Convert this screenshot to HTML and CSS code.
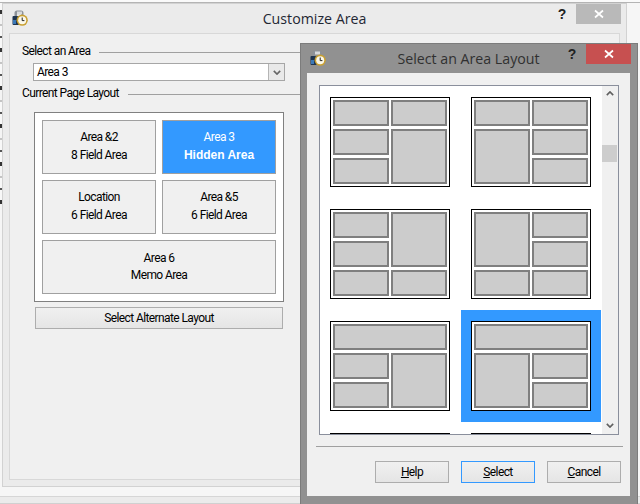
FILE: index.html
```html
<!DOCTYPE html>
<html lang="en">
<head>
<meta charset="utf-8">
<title>Customize Area</title>
<link rel="stylesheet" href="styles.css">
</head>
<body>
<svg class="defs" width="0" height="0" aria-hidden="true">
  <defs>
    <symbol id="app-icon" viewBox="0 0 16 16">
      <rect x="0.5" y="6" width="8" height="9" rx="1" fill="#1f3550"/>
      <rect x="1" y="10" width="3" height="4" fill="#3a78b8"/>
      <path d="M2.5 6 V3 Q2.5 0.5 5 0.5 H9 Q11.5 0.5 11.5 3 V6 H9 V3.2 H5 V6 Z" fill="#8d9298"/>
      <rect x="5" y="1.5" width="5" height="3" fill="#d8dadc"/>
      <circle cx="10.2" cy="10.2" r="5.6" fill="#c9a032"/>
      <circle cx="10.2" cy="10.2" r="4" fill="#fbf8ea"/>
      <path d="M10.2 7.5 V10.6 H12.4" fill="none" stroke="#222" stroke-width="1"/>
    </symbol>
    <symbol id="close-x" viewBox="0 0 10 10">
      <path d="M1 1.5 L9 8.5 M9 1.5 L1 8.5" fill="none" stroke="#fff" stroke-width="1.7"/>
    </symbol>
  </defs>
</svg>

<main class="desktop">
  <section class="window window-back">
    <header class="titlebar">
      <svg class="app-icon"><use href="#app-icon"/></svg>
      <h1 class="title">Customize Area</h1>
      <div class="controls">
        <span class="help-mark">?</span>
        <span class="close close-idle"><svg class="close-icon"><use href="#close-x"/></svg></span>
      </div>
    </header>
    <div class="client form">
      <div class="group-label"><span>Select an Area</span></div>
      <div class="combo">
        <span class="combo-value">Area 3</span>
        <span class="combo-drop">
          <svg class="chev-small" viewBox="0 0 10 6"><path d="M1 1 L5 5 L9 1" fill="none" stroke="#666" stroke-width="2"/></svg>
        </span>
      </div>
      <div class="group-label"><span>Current Page Layout</span></div>
      <div class="areas">
        <button class="area"><span>Area &amp;2</span><span>8 Field Area</span></button>
        <button class="area area-on"><span>Area 3</span><strong>Hidden Area</strong></button>
        <button class="area"><span>Location</span><span>6 Field Area</span></button>
        <button class="area"><span>Area &amp;5</span><span>6 Field Area</span></button>
        <button class="area area-wide"><span>Area 6</span><span>Memo Area</span></button>
      </div>
      <button class="btn btn-alt">Select Alternate Layout</button>
    </div>
  </section>

  <section class="window window-front">
    <header class="titlebar">
      <svg class="app-icon"><use href="#app-icon"/></svg>
      <h2 class="title">Select an Area Layout</h2>
      <div class="controls">
        <span class="help-mark">?</span>
        <span class="close close-red"><svg class="close-icon"><use href="#close-x"/></svg></span>
      </div>
    </header>
    <div class="client picker">
      <div class="listbox">
        <div class="tiles">
          <div class="tile"><div class="thumb"><i></i><i></i><i></i><i class="r2"></i><i></i></div></div>
          <div class="tile"><div class="thumb"><i></i><i></i><i class="r2"></i><i></i><i></i></div></div>
          <div class="tile"><div class="thumb"><i></i><i class="r2"></i><i></i><i></i><i></i></div></div>
          <div class="tile"><div class="thumb"><i class="r2"></i><i></i><i></i><i></i><i></i></div></div>
          <div class="tile"><div class="thumb"><i class="c2"></i><i></i><i class="r2"></i><i></i></div></div>
          <div class="tile tile-on"><div class="thumb"><i class="c2"></i><i class="r2"></i><i></i><i></i></div></div>
          <div class="tile"><div class="thumb"></div></div>
          <div class="tile"><div class="thumb"></div></div>
        </div>
        <div class="scrollbar">
          <svg class="chev" viewBox="0 0 10 6"><path d="M1 5 L5 1 L9 5" fill="none" stroke="#606060" stroke-width="2"/></svg>
          <div class="thumb-bar"></div>
          <svg class="chev chev-down" viewBox="0 0 10 6"><path d="M1 1 L5 5 L9 1" fill="none" stroke="#606060" stroke-width="2"/></svg>
        </div>
      </div>
      <hr class="rule">
      <div class="actions">
        <button class="btn btn-act"><u>H</u>elp</button>
        <button class="btn btn-act btn-default"><u>S</u>elect</button>
        <button class="btn btn-act"><u>C</u>ancel</button>
      </div>
    </div>
  </section>
</main>
</body>
</html>
```
FILE: styles.css
```css
* { box-sizing: border-box; }
html, body { margin: 0; padding: 0; }
body {
  width: 640px;
  height: 504px;
  overflow: hidden;
  font-family: Roboto, "Liberation Sans", Arial, sans-serif;
  font-size: 12px;
  letter-spacing: -0.6px;
  color: #000;
}
.defs { position: absolute; }

.desktop {
  position: relative;
  width: 640px;
  height: 504px;
  overflow: hidden;
  background:
    linear-gradient(#f6f6f6 0 496px, #d6d6d6 496px 497px, #ebebeb 497px 503px, #d0d0d0 503px),
    #f6f6f6;
}
.desktop::before {
  content: "";
  position: absolute;
  left: 0;
  top: 0;
  width: 2px;
  height: 210px;
  background: repeating-linear-gradient(#f8f8f8 0 10px, #333 10px 14px, #f4f4f4 14px 24px, #c4c4c4 24px 26px, #f8f8f8 26px 36px, #555 36px 38px);
}
.desktop::after {
  content: "";
  position: absolute;
  left: 0;
  top: 0;
  width: 640px;
  height: 3px;
  background: linear-gradient(#fafafa 0 2px, #b4b4b4 2px);
}

.window { position: absolute; display: flex; flex-direction: column; z-index: 1; }
.window-back {
  left: 2px;
  top: 3px;
  width: 625px;
  height: 484px;
  background: #ebebeb;
  border: 1px solid #d2d2d2;
  padding: 0 6px 6px;
}
.window-front {
  left: 300px;
  top: 43px;
  width: 338px;
  height: 470px;
  background: #919191;
  border: 1px solid #7c7c7c;
  padding: 0 7px 16px 6px;
  z-index: 2;
}

.titlebar {
  position: relative;
  flex: none;
  height: 29px;
  display: grid;
  grid-template-columns: 1fr auto 1fr;
  align-items: center;
}
.app-icon { width: 16px; height: 16px; margin: 0 0 2px 3px; }
.title {
  margin: 0;
  font-family: "Open Sans", "Noto Sans", sans-serif;
  font-weight: 400;
  font-size: 14.2px;
  letter-spacing: 0;
  color: #1f2733;
}
.window-front .title { color: #303030; }
.controls {
  justify-self: end;
  align-self: start;
  display: flex;
  align-items: flex-start;
  gap: 8px;
  letter-spacing: 0;
}
.help-mark {
  width: 12px;
  font-family: "Liberation Sans", sans-serif;
  font-weight: 700;
  font-size: 14px;
  line-height: 20px;
  text-align: center;
  color: #222;
}
.close {
  width: 45px;
  height: 20px;
  display: flex;
  align-items: center;
  justify-content: center;
}
.close-idle { background: #b9b9b9; }
.close-red { background: #c75050; }
.close-icon { width: 10px; height: 10px; }
.window-back .controls { margin-right: -1px; }
.window-front .controls { margin-right: -1px; }

.client {
  flex: 1;
  background: #f0f0f0;
  min-height: 0;
}
.form {
  border: 1px solid #d8d8d8;
  padding: 10px 8px 0 12px;
}
.group-label {
  display: flex;
  align-items: center;
  height: 14px;
  gap: 9px;
  white-space: nowrap;
}
.group-label::after {
  content: "";
  flex: 1;
  height: 1px;
  margin-top: 2px;
  background: #a0a0a0;
}
.combo {
  margin: 5px 0 5px 11px;
  width: 252px;
  height: 18px;
  display: flex;
  background: #fff;
  border: 1px solid #a6a6a6;
}
.combo-value { flex: 1; padding-left: 3px; line-height: 16px; }
.combo-drop {
  width: 16px;
  display: flex;
  align-items: center;
  justify-content: center;
  background: #e9e9e9;
  border-left: 1px solid #b5b5b5;
}
.chev-small { width: 8px; height: 5px; }

.areas {
  margin: 12px 0 0 12px;
  width: 250px;
  height: 190px;
  padding: 7px;
  background: #fff;
  border: 1px solid #808080;
  display: grid;
  grid-template-columns: 114px 114px;
  grid-auto-rows: 54px;
  gap: 6px;
}
.area {
  font: inherit;
  letter-spacing: inherit;
  padding: 0 0 2px;
  background: #f0f0f0;
  border: 1px solid #a0a0a0;
  display: flex;
  flex-direction: column;
  align-items: center;
  justify-content: center;
  line-height: 18px;
  color: #000;
}
.area-wide { grid-column: 1 / 3; line-height: 17px; padding: 0; }
.area-on { background: #3399ff; color: #fff; }
.area-on strong { font-family: "Liberation Sans", sans-serif; font-size: 12px; letter-spacing: 0; }

.btn {
  font: inherit;
  letter-spacing: inherit;
  color: #000;
  padding: 0;
  border: 1px solid #adadad;
  background: linear-gradient(#f0f0f0, #e5e5e5);
}
.btn-alt {
  display: block;
  margin: 5px 0 0 13px;
  width: 248px;
  height: 22px;
}

.picker {
  padding: 12px 0 0 12px;
  display: flex;
  flex-direction: column;
}
.listbox {
  width: 300px;
  height: 350px;
  flex: none;
  display: flex;
  justify-content: space-between;
  background: #fff;
  border: 1px solid #8a8f9c;
  overflow: hidden;
}
.tiles {
  width: 282px;
  display: grid;
  grid-template-columns: 140px 140px;
  grid-auto-rows: 112px;
  column-gap: 1px;
  align-content: start;
}
.tile { padding: 11px 10px; }
.tile-on { background: #3399ff; }
.thumb {
  width: 120px;
  height: 90px;
  padding: 2px;
  background: #fff;
  border: 1px solid #000;
  display: grid;
  grid-template-columns: 56px 56px;
  grid-template-rows: 26px 26px 26px;
  column-gap: 2px;
  row-gap: 3px;
}
.thumb i {
  display: block;
  background: #cccccc;
  border: 2px solid #7f7f7f;
}
.thumb .r2 { grid-row: span 2; }
.thumb .c2 { grid-column: span 2; }

.scrollbar {
  position: relative;
  width: 16px;
  background: #f0f0f0;
  display: flex;
  flex-direction: column;
  align-items: center;
  padding-top: 5px;
}
.chev { flex: none; width: 8px; height: 5px; }
.chev-down { margin-top: auto; margin-bottom: 6px; }
.thumb-bar {
  flex: none;
  width: 15px;
  height: 17px;
  margin-top: 49px;
  margin-right: 1px;
  background: #cdcdcd;
}
.rule {
  flex: none;
  width: 307px;
  height: 1px;
  margin: 11px 0 0 -3px;
  border: 0;
  background: #a0a0a0;
}
.actions {
  margin: 14px 0 0 56px;
  display: flex;
  gap: 12px;
}
.btn-act { width: 74px; height: 22px; }
.btn-default { border-color: #3399ff; }
```
